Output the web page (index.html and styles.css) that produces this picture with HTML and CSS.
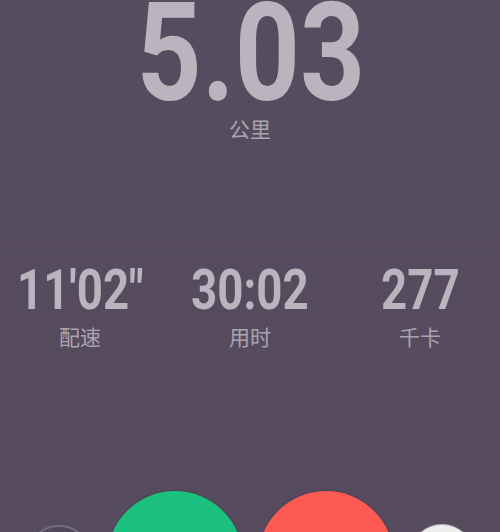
FILE: index.html
```html
<!DOCTYPE html>
<html lang="zh">
<head>
<meta charset="utf-8">
<title>跑步</title>
<link rel="stylesheet" href="styles.css">
</head>
<body>
<div class="screen">
  <section class="hero">
    <div class="big"><span class="num">5.03</span></div>
    <div class="label hero-label">公里</div>
  </section>
  <section class="stats">
    <div class="stat">
      <div class="value"><span class="num">11'02"</span></div>
      <div class="label">配速</div>
    </div>
    <div class="stat">
      <div class="value"><span class="num">30:02</span></div>
      <div class="label">用时</div>
    </div>
    <div class="stat">
      <div class="value"><span class="num">277</span></div>
      <div class="label">千卡</div>
    </div>
  </section>
  <section class="controls">
    <div class="btn ring"></div>
    <div class="btn go"></div>
    <div class="btn stop"></div>
    <div class="btn light"></div>
  </section>
</div>
</body>
</html>
```

FILE: styles.css
```css
html, body {
  margin: 0;
  padding: 0;
}
body {
  background: #564c5e;
}
.screen {
  width: 500px;
  height: 532px;
  overflow: hidden;
  background: linear-gradient(#564c5f, #574b5e);
  display: flex;
  flex-direction: column;
}
.num {
  display: inline-block;
  font-family: Roboto, "Liberation Sans", sans-serif;
  font-weight: 700;
  transform: scaleX(0.83);
  color: #b9b4bd;
}
.hero {
  text-align: center;
  margin-top: -2px;
}
.big {
  font-size: 137px;
  line-height: 110px;
  height: 110px;
  padding-left: 2px;
}
.label {
  font-family: "Noto Sans CJK SC", "Noto Sans", sans-serif;
  font-size: 21px;
  line-height: 22px;
  color: #aaa4af;
  text-align: center;
}
.hero-label {
  margin-top: 9px;
}
.stats {
  display: grid;
  grid-template-columns: repeat(3, 170px);
  justify-content: center;
  margin-top: 124px;
}
.stat {
  display: flex;
  flex-direction: column;
  align-items: center;
}
.value {
  font-size: 55px;
  line-height: 55px;
  height: 55px;
  white-space: nowrap;
}
.stat .label {
  margin-top: 7px;
}
.controls {
  display: flex;
  justify-content: center;
  align-items: flex-start;
  gap: 15px;
  margin-top: 144px;
}
.btn {
  flex: none;
  border-radius: 50%;
  box-sizing: border-box;
}
.ring {
  width: 66px;
  height: 66px;
  margin-top: 34px;
  border: 2px solid #766e7c;
  background: #51485a;
}
.go {
  width: 136px;
  height: 136px;
  background: #1dc17f;
  box-shadow: 0 0 2px rgba(40, 30, 50, 0.6);
}
.stop {
  width: 136px;
  height: 136px;
  background: #fd5b52;
  box-shadow: 0 0 2px rgba(40, 30, 50, 0.6);
}
.light {
  width: 66px;
  height: 66px;
  margin-top: 33px;
  background: #ededed;
  border: 1px solid #b8b3bb;
}
```
